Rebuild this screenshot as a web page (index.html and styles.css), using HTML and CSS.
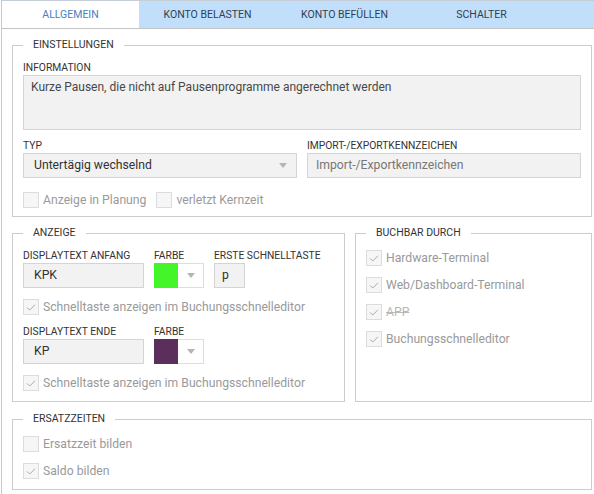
FILE: index.html
```html
<!DOCTYPE html>
<html lang="de">
<head>
<meta charset="utf-8">
<link rel="stylesheet" href="styles.css">
</head>
<body>
<div class="window">
  <div class="tabs">
    <div class="tab active">ALLGEMEIN</div>
    <div class="tab">KONTO BELASTEN</div>
    <div class="tab">KONTO BEFÜLLEN</div>
    <div class="tab">SCHALTER</div>
  </div>
  <div class="panel">
    <fieldset class="group">
      <legend>EINSTELLUNGEN</legend>
      <div class="lbl first">INFORMATION</div>
      <div class="textarea">Kurze Pausen, die nicht auf Pausenprogramme angerechnet werden</div>
      <div class="cols">
        <div class="col">
          <div class="lbl">TYP</div>
          <div class="input select"><span>Untertägig wechselnd</span><span class="arrow"></span></div>
        </div>
        <div class="col">
          <div class="lbl">IMPORT-/EXPORTKENNZEICHEN</div>
          <div class="input placeholder">Import-/Exportkennzeichen</div>
        </div>
      </div>
      <div class="checkrow">
        <div class="check"><span class="box"></span><span>Anzeige in Planung</span></div>
        <div class="check"><span class="box"></span><span>verletzt Kernzeit</span></div>
      </div>
    </fieldset>

    <div class="split">
      <fieldset class="group anzeige">
        <legend>ANZEIGE</legend>
        <div class="frow first">
          <div class="fcol w-text">
            <div class="lbl">DISPLAYTEXT ANFANG</div>
            <div class="input text">KPK</div>
          </div>
          <div class="fcol">
            <div class="lbl">FARBE</div>
            <div class="color"><span class="swatch green"></span><span class="cdrop"><span class="arrow"></span></span></div>
          </div>
          <div class="fcol">
            <div class="lbl">ERSTE SCHNELLTASTE</div>
            <div class="input key">p</div>
          </div>
        </div>
        <div class="check item"><span class="box"><svg viewBox="0 0 16 16"><polyline points="3.5,8.5 6.5,11.5 12.5,5.5"/></svg></span><span>Schnelltaste anzeigen im Buchungsschnelleditor</span></div>
        <div class="frow">
          <div class="fcol w-text">
            <div class="lbl">DISPLAYTEXT ENDE</div>
            <div class="input text">KP</div>
          </div>
          <div class="fcol">
            <div class="lbl">FARBE</div>
            <div class="color"><span class="swatch purple"></span><span class="cdrop"><span class="arrow"></span></span></div>
          </div>
        </div>
        <div class="check item"><span class="box"><svg viewBox="0 0 16 16"><polyline points="3.5,8.5 6.5,11.5 12.5,5.5"/></svg></span><span>Schnelltaste anzeigen im Buchungsschnelleditor</span></div>
      </fieldset>

      <fieldset class="group buchbar">
        <legend>BUCHBAR DURCH</legend>
        <div class="check list"><span class="box"><svg viewBox="0 0 16 16"><polyline points="3.5,8.5 6.5,11.5 12.5,5.5"/></svg></span><span>Hardware-Terminal</span></div>
        <div class="check list"><span class="box"><svg viewBox="0 0 16 16"><polyline points="3.5,8.5 6.5,11.5 12.5,5.5"/></svg></span><span>Web/Dashboard-Terminal</span></div>
        <div class="check list"><span class="box"><svg viewBox="0 0 16 16"><polyline points="3.5,8.5 6.5,11.5 12.5,5.5"/></svg></span><span class="strike">APP</span></div>
        <div class="check list"><span class="box"><svg viewBox="0 0 16 16"><polyline points="3.5,8.5 6.5,11.5 12.5,5.5"/></svg></span><span>Buchungsschnelleditor</span></div>
      </fieldset>
    </div>

    <fieldset class="group ersatz">
      <legend>ERSATZZEITEN</legend>
      <div class="check list"><span class="box"></span><span>Ersatzzeit bilden</span></div>
      <div class="check list"><span class="box"><svg viewBox="0 0 16 16"><polyline points="3.5,8.5 6.5,11.5 12.5,5.5"/></svg></span><span>Saldo bilden</span></div>
    </fieldset>
  </div>
</div>
</body>
</html>
```

FILE: styles.css
```css
html, body {
  margin: 0;
  padding: 0;
  background: #ffffff;
}
body {
  font-family: Roboto, "Liberation Sans", sans-serif;
  color: #333;
}
.window {
  margin-left: 1px;
  border-left: 1px solid #c9c9c9;
  height: 494px;
  box-sizing: border-box;
}
.tabs {
  display: flex;
  height: 27px;
  border-top: 1px solid #c6cfd8;
  border-bottom: 1px solid #c4c4c4;
  background: #c1dffa;
}
.tab {
  width: 137px;
  text-align: center;
  line-height: 27px;
  font-size: 10.5px;
  color: #2f4056;
}
.tab.active {
  background: #ffffff;
  color: #4a7fc2;
}
.panel {
  padding: 10px 0 0 10px;
}
.group {
  margin: 0;
  border: 1px solid #cccccc;
  padding: 0 10px 8px 10px;
  width: 580px;
  box-sizing: border-box;
  min-width: 0;
}
.group legend {
  padding: 0 10px;
  font-size: 10.5px;
  line-height: 12px;
  color: #333;
}
.lbl {
  font-size: 10.3px;
  line-height: 12px;
  color: #333;
  margin-top: 10px;
  margin-bottom: 1px;
  white-space: nowrap;
}
.lbl.first {
  margin-top: 11px;
}
.textarea {
  height: 55px;
  box-sizing: border-box;
  background: #f2f2f2;
  border: 1px solid #d4d4d4;
  padding: 3px 7px;
  font-size: 12px;
  line-height: 16px;
  color: #484848;
}
.cols {
  display: flex;
  gap: 10px;
}
.col {
  flex: 1;
}
.input {
  height: 25px;
  box-sizing: border-box;
  background: #f2f2f2;
  border: 1px solid #d4d4d4;
  font-size: 12.2px;
  line-height: 23px;
  color: #333;
  white-space: nowrap;
}
.select {
  display: flex;
  justify-content: space-between;
  align-items: center;
  padding: 0 9px 0 10px;
}
.placeholder {
  padding: 0 8px;
  color: #777;
}
.arrow {
  width: 0;
  height: 0;
  border-left: 4px solid transparent;
  border-right: 4px solid transparent;
  border-top: 5px solid #b4b4b4;
}
.checkrow {
  display: flex;
  gap: 10px;
  margin-top: 14px;
}
.check {
  display: flex;
  align-items: center;
  gap: 4px;
  font-size: 12.2px;
  line-height: 16px;
  color: #9a9a9a;
  white-space: nowrap;
}
.box {
  width: 16px;
  height: 16px;
  box-sizing: border-box;
  border: 1px solid #dcdcdc;
  background: #f6f6f6;
  flex: none;
  display: flex;
}
.box svg {
  width: 14px;
  height: 14px;
}
.box polyline {
  fill: none;
  stroke: #a5a5a5;
  stroke-width: 1.1;
}
.split {
  display: flex;
  gap: 10px;
  margin-top: 10px;
  width: 580px;
}
.anzeige {
  width: 333px;
  padding-bottom: 10px;
}
.buchbar {
  width: 237px;
}
.frow {
  display: flex;
  gap: 10px;
}
.frow .lbl {
  margin-top: 11px;
}
.w-text {
  width: 121px;
}
.text {
  padding: 0 10px;
}
.key {
  width: 31px;
  padding: 0 7px;
}
.color {
  display: flex;
  height: 25px;
  width: 50px;
}
.swatch {
  width: 24px;
  height: 25px;
}
.green {
  background: #44f52a;
}
.purple {
  background: #5a2f5c;
}
.cdrop {
  flex: 1;
  border: 1px solid #dedede;
  border-left: none;
  display: flex;
  align-items: center;
  justify-content: center;
}
.check.item {
  margin-top: 11px;
}
.check.list {
  margin-top: 11px;
}
.strike {
  text-decoration: line-through;
  color: #b8b8b8;
}
.ersatz {
  margin-top: 11px;
  padding-bottom: 10px;
}
```
